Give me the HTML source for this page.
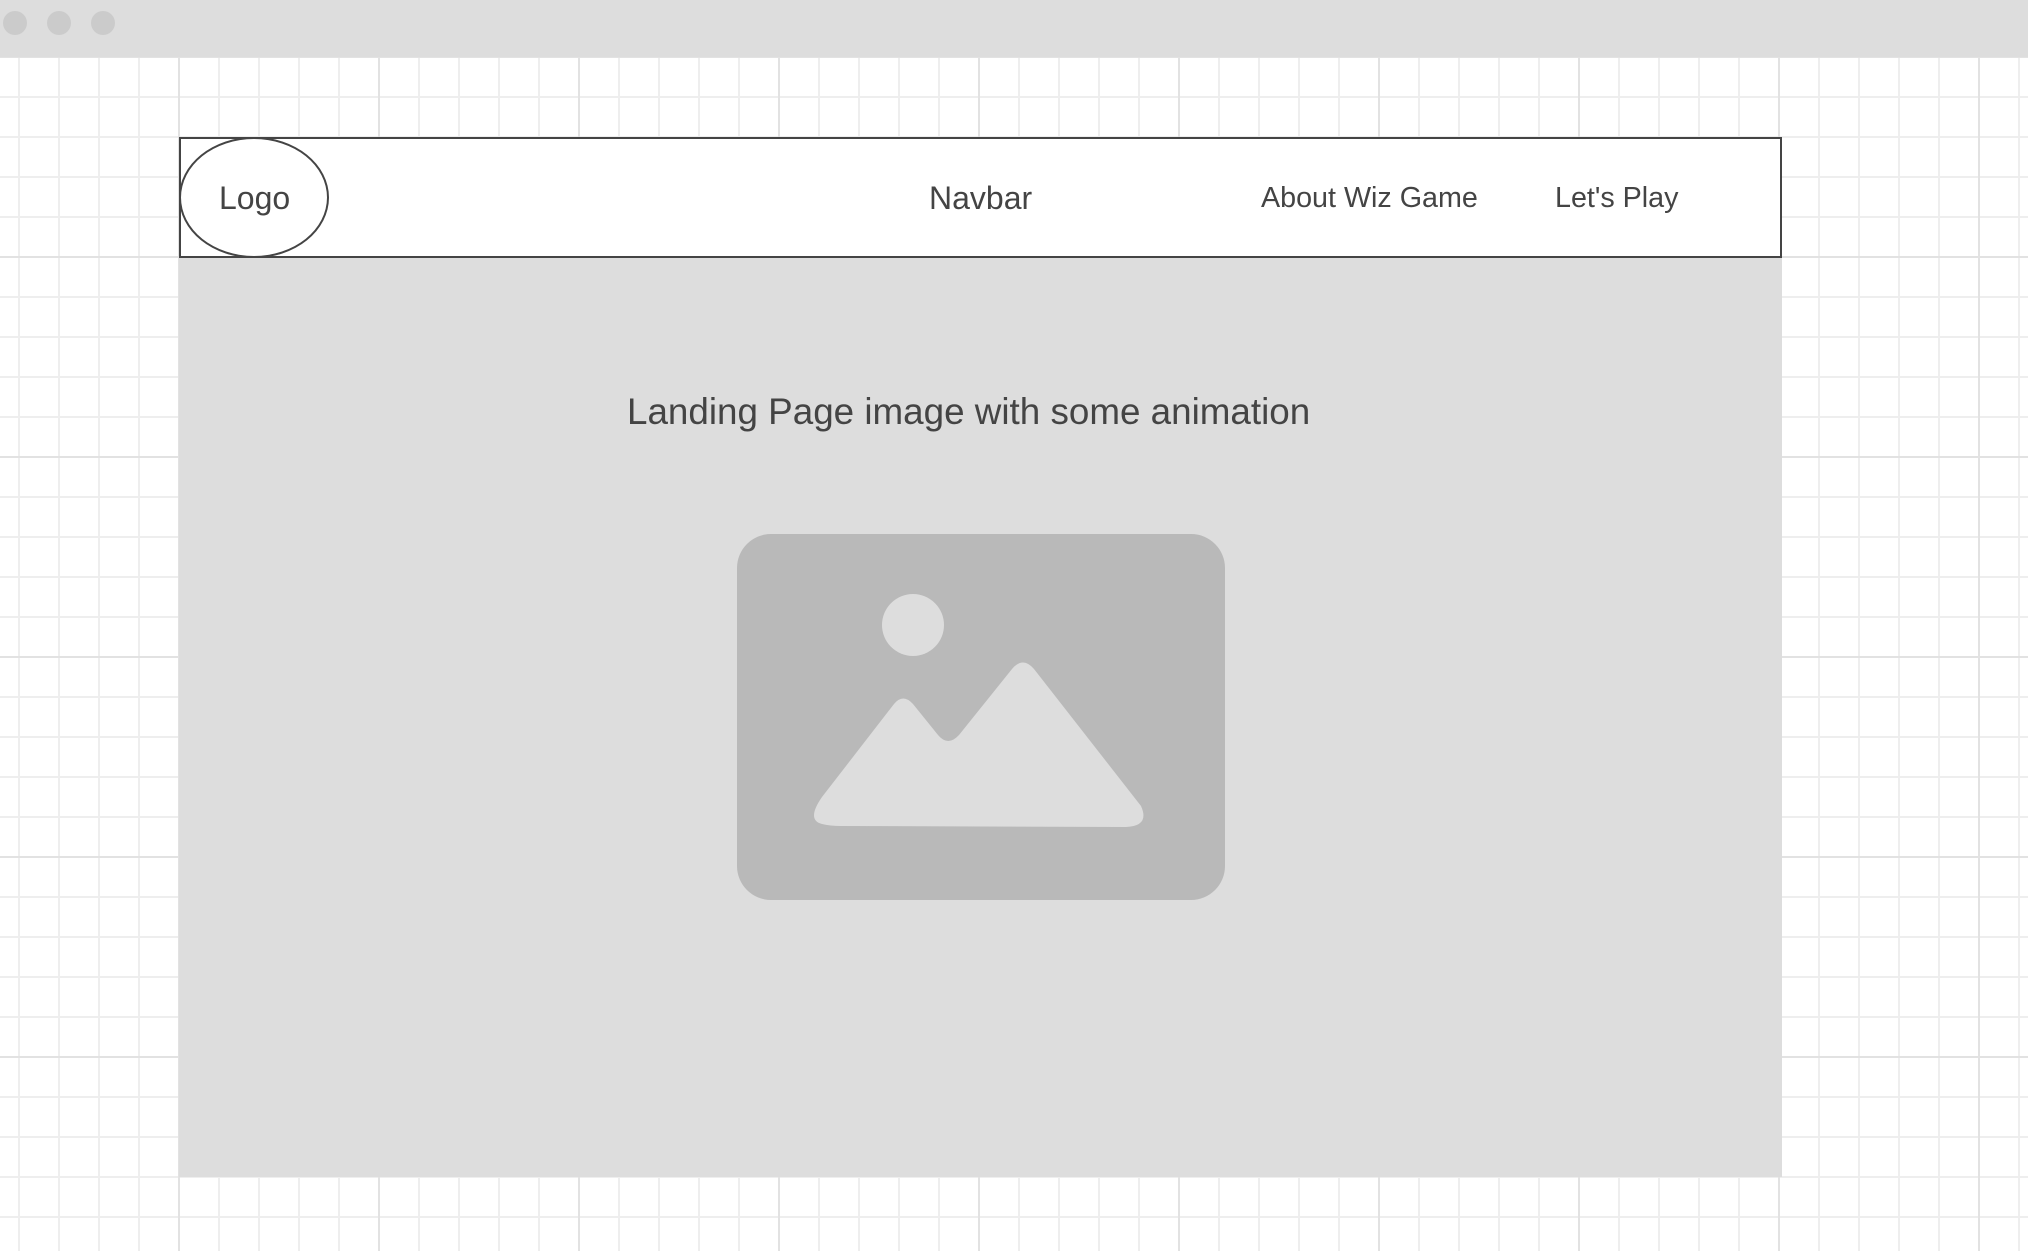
<!DOCTYPE html>
<html><head><meta charset="utf-8"><style>
html,body{margin:0;padding:0;}
body{width:2028px;height:1251px;position:relative;overflow:hidden;font-family:"Liberation Sans",sans-serif;color:#444;
background-color:#fff;
background-image:
linear-gradient(to right,#e2e2e2 2px,transparent 2px),
linear-gradient(to bottom,#e2e2e2 2px,transparent 2px),
linear-gradient(to right,#eeeeee 2px,transparent 2px),
linear-gradient(to bottom,#eeeeee 2px,transparent 2px);
background-size:200px 200px,200px 200px,40px 40px,40px 40px;
background-position:178px 56px,178px 56px,18px 56px,18px 56px;}
.bar{position:absolute;left:0;top:0;width:2028px;height:57px;background:#dddddd;}
.dot{position:absolute;top:11px;width:24px;height:24px;border-radius:50%;background:#cbcbcb;}
.content{position:absolute;left:179px;top:258px;width:1603px;height:919px;background:#dddddd;}
.nav{position:absolute;left:179px;top:137px;width:1599px;height:117px;border:2px solid #444;background:#fff;}
.ell{position:absolute;left:179px;top:137px;width:146px;height:117px;border:2px solid #444;border-radius:50%;}
.t{position:absolute;white-space:nowrap;}
</style></head><body>
<div class="bar"><div class="dot" style="left:3px"></div><div class="dot" style="left:47px"></div><div class="dot" style="left:91px"></div></div>
<div class="content"></div>
<div class="nav"></div>
<div class="ell"></div>
<div class="t" style="left:219px;top:180px;font-size:32px;">Logo</div>
<div class="t" style="left:929px;top:180px;font-size:32px;">Navbar</div>
<div class="t" style="left:1261px;top:182px;font-size:28.7px;">About Wiz Game</div>
<div class="t" style="left:1555px;top:182px;font-size:28.7px;">Let's Play</div>
<div class="t" style="left:627px;top:391px;font-size:36.8px;">Landing Page image with some animation</div>
<svg style="position:absolute;left:0;top:0" width="2028" height="1251">
<rect x="737" y="534" width="488" height="366" rx="34" fill="#b9b9b9"/>
<circle cx="913" cy="625" r="31" fill="#dddddd"/>
<path d="M841 826 L1126 827 Q1150 826 1141 806 L1034 669 Q1023 656 1012 669 L959 735 Q948 747 938 735 L913 704 Q903 693 894 704 L822 797 Q806 820 822 824 Q830 826 841 826 Z" fill="#dddddd"/>
</svg>
</body></html>
